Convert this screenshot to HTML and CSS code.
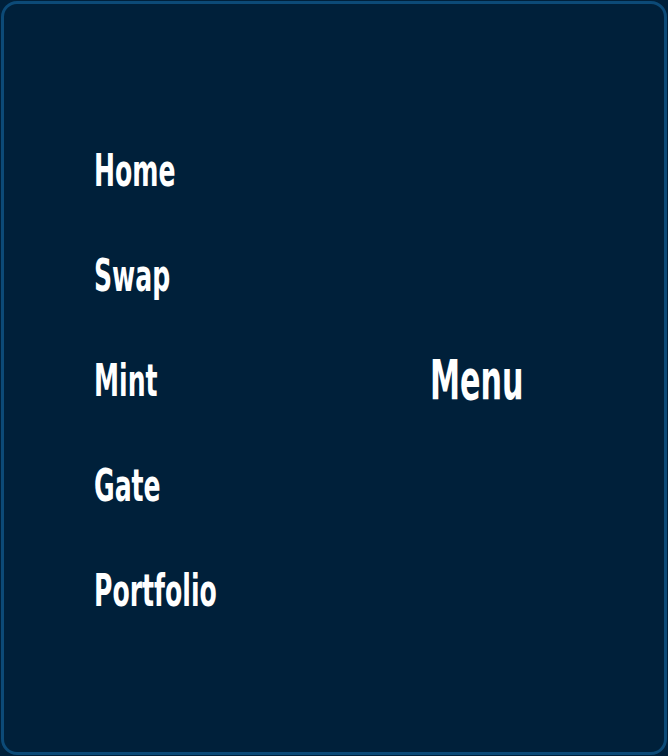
FILE: index.html
```html
<!DOCTYPE html>
<html>
<head>
<meta charset="utf-8">
<link rel="stylesheet" href="styles.css">
</head>
<body>
<div class="panel">
  <nav class="nav">
    <a class="nav-item" href="#">Home</a>
    <a class="nav-item" href="#">Swap</a>
    <a class="nav-item" href="#">Mint</a>
    <a class="nav-item" href="#">Gate</a>
    <a class="nav-item" href="#">Portfolio</a>
  </nav>
  <div class="title">Menu</div>
</div>
</body>
</html>
```

FILE: styles.css
```css
html, body {
  margin: 0;
  padding: 0;
  background: #00203a;
}
body {
  width: 668px;
  height: 756px;
  overflow: hidden;
}
.panel {
  box-sizing: border-box;
  margin: 1px;
  width: 666px;
  height: 754px;
  padding-top: 4px;
  border: 3px solid #0c4a77;
  border-radius: 16px;
  background: #00203a;
  display: flex;
  align-items: center;
  font-family: "DejaVu Sans Condensed", "DejaVu Sans", sans-serif;
  font-stretch: condensed;
  font-weight: bold;
  color: #ffffff;
}
.nav {
  display: flex;
  flex-direction: column;
  padding-left: 90px;
  width: 250px;
}
.nav-item {
  color: #ffffff;
  text-decoration: none;
  font-size: 44px;
  line-height: 105px;
  transform: scaleX(0.635);
  transform-origin: left center;
}
.title {
  margin-left: 86px;
  font-size: 55px;
  transform: scaleX(0.61);
  transform-origin: left center;
}
```
